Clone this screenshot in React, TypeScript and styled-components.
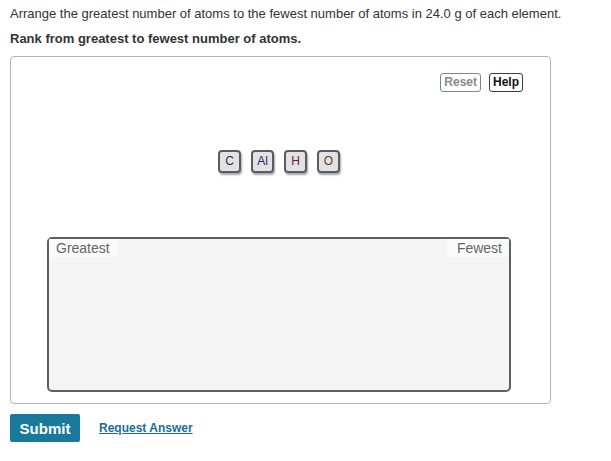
import React from "react";
import styled, { createGlobalStyle } from "styled-components";

const Global = createGlobalStyle`
  html, body { margin: 0; padding: 0; background: #fff; }
  body { font-family: "Liberation Sans", Arial, Helvetica, sans-serif; color: #222; }
`;

const Page = styled.div`
  padding: 0 10px;
`;

const Prompt = styled.p`
  margin: 5px 0 0;
  font-size: 13px;
  line-height: 17px;
  color: #333;
  white-space: nowrap;
`;

const Instruction = styled.p`
  margin: 8px 0 0;
  font-size: 13px;
  line-height: 17px;
  font-weight: bold;
  color: #333;
`;

const Panel = styled.div`
  width: 541px;
  margin-top: 9px;
  height: 348px;
  box-sizing: border-box;
  border: 1px solid #b4b4b4;
  border-radius: 4px;
  display: flex;
  flex-direction: column;
  padding: 16px 27px 11px 36px;
`;

const Toolbar = styled.div`
  display: flex;
  justify-content: flex-end;
  gap: 8px;
`;

const ToolButton = styled.button<{ $disabled?: boolean }>`
  font-family: "Liberation Sans", Arial, sans-serif;
  font-size: 12px;
  font-weight: bold;
  height: 19px;
  padding: 0 3px;
  background: #fff;
  border: 1px solid ${(p) => (p.$disabled ? "#7a8a8a" : "#3a4040")};
  border-radius: 3px;
  color: ${(p) => (p.$disabled ? "#8a8a8a" : "#111")};
  line-height: 17px;
`;

const Tiles = styled.div`
  display: flex;
  justify-content: center;
  gap: 10px;
  margin-top: 58px;
  margin-right: 12px;
`;

const Tile = styled.div<{ $color?: string }>`
  box-sizing: border-box;
  min-width: 23px;
  height: 23px;
  padding: 0 4px;
  border: 2px solid #5c5a66;
  border-radius: 4px;
  background: #e2e2e2;
  box-shadow: 1px 2px 2px rgba(0, 0, 0, 0.35);
  font-size: 12px;
  line-height: 19px;
  text-align: center;
  color: ${(p) => p.$color || "#222"};
`;

const DropZone = styled.div`
  margin-top: 64px;
  margin-right: 12px;
  flex: 1;
  box-sizing: border-box;
  border: 2px solid #5e5e66;
  border-radius: 5px;
  background: #f5f5f5;
  display: flex;
  justify-content: space-between;
  align-items: flex-start;
`;

const ZoneLabel = styled.span<{ $w: number; $right?: boolean }>`
  font-size: 14px;
  line-height: 18px;
  color: #666;
  background: #fafafa;
  padding: 0 7px;
  width: ${(p) => p.$w}px;
  box-sizing: border-box;
  text-align: ${(p) => (p.$right ? "right" : "left")};
`;

const Footer = styled.div`
  display: flex;
  align-items: center;
  gap: 19px;
  margin-top: 10px;
`;

const SubmitButton = styled.button`
  width: 70px;
  height: 28px;
  border: none;
  border-radius: 2px;
  background: #1a7a9c;
  color: #fff;
  font-family: "Liberation Sans", Arial, sans-serif;
  font-size: 15px;
  font-weight: bold;
`;

const LinkButton = styled.a`
  font-size: 12px;
  font-weight: bold;
  color: #1a6e97;
  text-decoration: underline;
`;

export default function App() {
  return (
    <>
      <Global />
      <Page>
        <Prompt>
          Arrange the greatest number of atoms to the fewest number of atoms in 24.0 g of each element.
        </Prompt>
        <Instruction>Rank from greatest to fewest number of atoms.</Instruction>
        <Panel>
          <Toolbar>
            <ToolButton $disabled>Reset</ToolButton>
            <ToolButton>Help</ToolButton>
          </Toolbar>
          <Tiles>
            <Tile $color="#1a2a6a">C</Tile>
            <Tile $color="#1a2a6a">Al</Tile>
            <Tile $color="#6a1a4a">H</Tile>
            <Tile $color="#6a3a1a">O</Tile>
          </Tiles>
          <DropZone>
            <ZoneLabel $w={68}>Greatest</ZoneLabel>
            <ZoneLabel $w={62} $right>Fewest</ZoneLabel>
          </DropZone>
        </Panel>
        <Footer>
          <SubmitButton>Submit</SubmitButton>
          <LinkButton>Request Answer</LinkButton>
        </Footer>
      </Page>
    </>
  );
}
